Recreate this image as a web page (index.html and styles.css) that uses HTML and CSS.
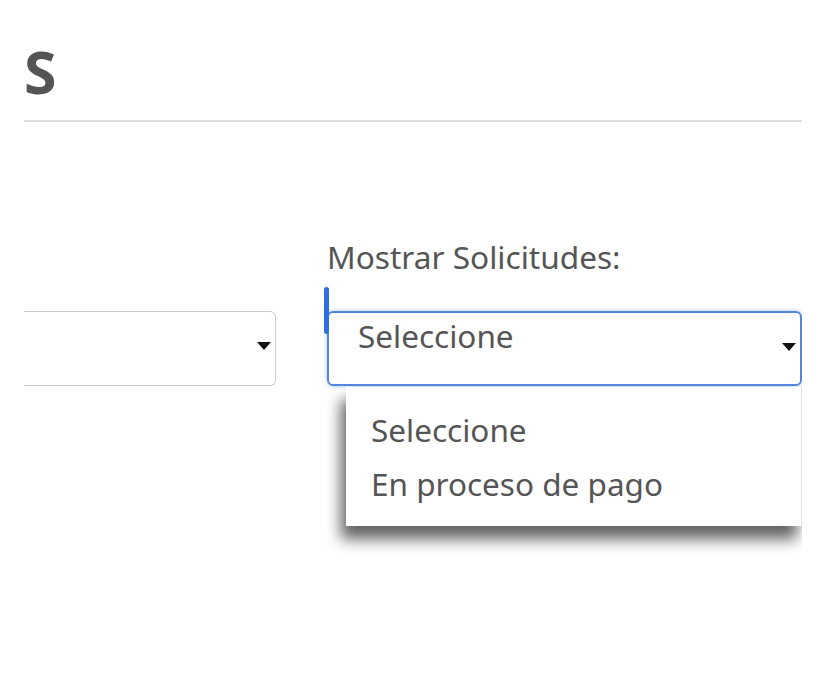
FILE: index.html
```html
<!DOCTYPE html>
<html lang="es">
<head>
<meta charset="utf-8">
<title>Solicitudes</title>
<link rel="stylesheet" href="styles.css">
</head>
<body>
<div class="page">
  <h1 class="title">S</h1>
  <hr class="rule">
  <div class="filters">
    <div class="field field-left">
      <div class="select select-plain">
        <span class="select-value"></span>
        <span class="caret"></span>
      </div>
    </div>
    <div class="field field-right">
      <label class="field-label">Mostrar Solicitudes:</label>
      <span class="focus-bar"></span>
      <div class="select select-focus">
        <span class="select-value">Seleccione</span>
        <span class="caret"></span>
      </div>
      <ul class="dropdown">
        <li class="option">Seleccione</li>
        <li class="option">En proceso de pago</li>
      </ul>
    </div>
  </div>
</div>
</body>
</html>
```

FILE: styles.css
```css
html, body {
  margin: 0;
  padding: 0;
  background: #ffffff;
}

body {
  font-family: "Noto Sans", "Open Sans", "Liberation Sans", sans-serif;
  color: #555555;
}

.page {
  margin-left: 24px;
  width: 778px;
  overflow: hidden;
  height: 697px;
}

.title {
  margin: 0;
  padding-top: 35px;
  font-family: "Open Sans", "Noto Sans", sans-serif;
  font-size: 59px;
  font-weight: 700;
  line-height: 72px;
  height: 72px;
  color: #555555;
}

.rule {
  margin: 13px 0 0 0;
  border: 0;
  height: 2px;
  background: #dddddd;
}

.filters {
  display: flex;
  align-items: flex-end;
  gap: 51px;
  margin-top: 115px;
  margin-left: -60px;
}

.field {
  position: relative;
  display: flex;
  flex-direction: column;
}

.field-left {
  width: 312px;
}

.field-right {
  flex: 1;
}

.field-label {
  font-size: 31.6px;
  line-height: 40px;
  height: 40px;
  margin-bottom: 34px;
}

.select {
  box-sizing: border-box;
  height: 75px;
  border-radius: 6px;
  display: flex;
  align-items: flex-start;
  justify-content: space-between;
  padding: 3px 4px 0 29px;
  font-size: 31.5px;
  line-height: 40px;
}

.select-plain {
  border: 1.5px solid #cccccc;
  border-left: 0;
  border-radius: 0 6px 6px 0;
}

.select-focus {
  border: 2px solid #5587d8;
  box-shadow: 0 0 4px rgba(70, 130, 230, 0.5);
}

.caret {
  width: 0;
  height: 0;
  border-left: 7px solid transparent;
  border-right: 7px solid transparent;
  border-top: 8px solid #111111;
  margin-top: 27px;
}

.focus-bar {
  position: absolute;
  left: -3px;
  top: 50px;
  width: 5px;
  height: 47px;
  border-radius: 3px;
  background: #2f6fe4;
}

.dropdown {
  position: absolute;
  top: 150px;
  left: 19px;
  right: 0;
  height: 139px;
  box-sizing: border-box;
  margin: 0;
  padding: 16px 0 0 25px;
  list-style: none;
  background: #ffffff;
  border-right: 1px solid #e2e2e2;
  box-shadow: -5px 13px 14px rgba(0, 0, 0, 0.62);
  clip-path: inset(0 0 -40px -40px);
  font-size: 31.5px;
}

.option {
  line-height: 54px;
  height: 54px;
}
```
